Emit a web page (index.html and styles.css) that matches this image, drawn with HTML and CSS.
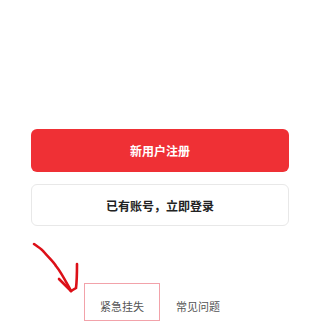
FILE: index.html
```html
<!DOCTYPE html>
<html lang="zh-CN">
<head>
<meta charset="utf-8">
<link rel="stylesheet" href="styles.css">
</head>
<body>
<div class="page">
  <div class="actions">
    <button class="btn btn-primary">新用户注册</button>
    <button class="btn btn-secondary">已有账号，立即登录</button>
  </div>
  <div class="links">
    <a class="link link-marked">紧急挂失</a>
    <a class="link">常见问题</a>
  </div>
  <svg class="annot-arrow" width="60" height="60" viewBox="0 0 60 60">
    <path d="M6 6 C10 9, 14 11, 16 14 C20 19, 25 23, 28 28 C33 34, 36 40, 43 53" fill="none" stroke="#dc1018" stroke-width="2.6" stroke-linecap="round"/>
    <path d="M31 41 L43 53" fill="none" stroke="#dc1018" stroke-width="2.6" stroke-linecap="round"/>
    <path d="M49 26 C49 34, 49 42, 48 50 L43 53" fill="none" stroke="#dc1018" stroke-width="2.6" stroke-linecap="round"/>
  </svg>
</div>
</body>
</html>
```
FILE: styles.css
```css
html, body {
  margin: 0;
  padding: 0;
  background: #fff;
}
body {
  width: 320px;
  height: 326px;
  overflow: hidden;
  font-family: "Noto Sans CJK SC", "Noto Sans", sans-serif;
}
.page {
  position: relative;
  padding-top: 129px;
}
.actions {
  display: flex;
  flex-direction: column;
  gap: 12px;
  margin: 0 31px;
}
.btn {
  display: block;
  width: 100%;
  font-family: inherit;
  font-size: 12px;
  font-weight: 700;
  border-radius: 6px;
  cursor: pointer;
  padding: 0;
}
.btn-primary {
  height: 43px;
  background: #ef3035;
  color: #fff;
  border: none;
}
.btn-secondary {
  height: 42px;
  background: #fff;
  color: #222;
  border: 1px solid #e8e8e8;
}
.links {
  display: flex;
  justify-content: center;
  margin-top: 57px;
}
.link {
  box-sizing: border-box;
  width: 76px;
  height: 38px;
  padding-top: 14px;
  text-align: center;
  font-size: 11px;
  line-height: 16px;
  color: #555;
  border: 1px solid transparent;
}
.link-marked {
  border-color: #f2a2aa;
}
.annot-arrow {
  position: absolute;
  left: 28px;
  top: 238px;
}
```
